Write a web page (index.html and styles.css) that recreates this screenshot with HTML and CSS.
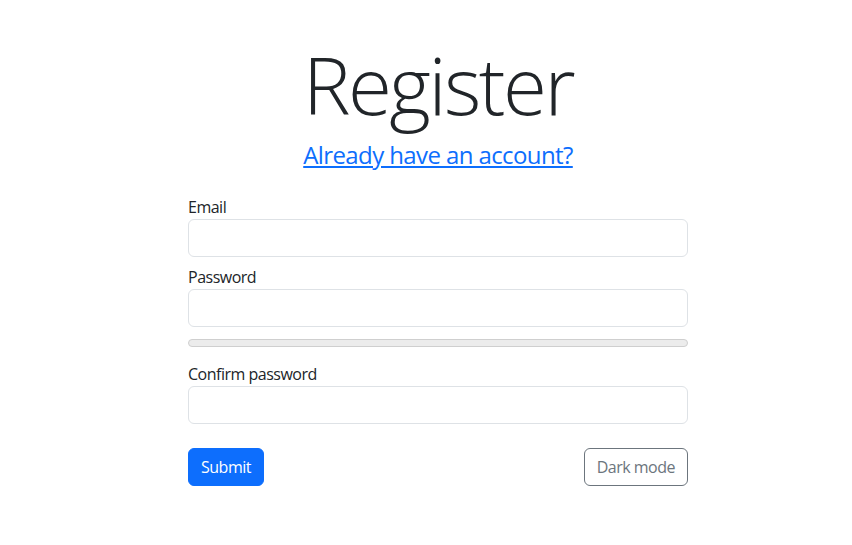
FILE: index.html
```html
<!DOCTYPE html>
<html lang="en">
<head>
<meta charset="utf-8">
<title>Register</title>
<link rel="stylesheet" href="styles.css">
</head>
<body>
<main class="container">
  <header class="intro">
    <h1 class="title">Register</h1>
    <a class="login-link" href="#">Already have an account?</a>
  </header>
  <form class="form">
    <div class="field">
      <label class="label" for="email">Email</label>
      <input class="input" id="email" type="email">
    </div>
    <div class="field">
      <label class="label" for="password">Password</label>
      <input class="input" id="password" type="password">
      <div class="strength"></div>
    </div>
    <div class="field">
      <label class="label" for="confirm">Confirm password</label>
      <input class="input" id="confirm" type="password">
    </div>
    <div class="actions">
      <button type="button" class="btn btn-primary">Submit</button>
      <button type="button" class="btn btn-outline">Dark mode</button>
    </div>
  </form>
</main>
</body>
</html>
```
FILE: styles.css
```css
* { box-sizing: border-box; }
html, body { margin: 0; padding: 0; background: #fff; }
body {
  font-family: "Open Sans", "Noto Sans", sans-serif;
  font-size: 16px;
  line-height: 1.5;
  letter-spacing: -0.5px;
  color: #212529;
}
.container {
  width: 500px;
  margin: 0 0 0 188px;
  padding-top: 36px;
}
.intro {
  display: flex;
  flex-direction: column;
  align-items: center;
}
.title {
  margin: 0;
  font-size: 80px;
  font-weight: 300;
  line-height: 1.2;
  letter-spacing: -2.5px;
}
.login-link {
  font-size: 24px;
  line-height: 1.2;
  letter-spacing: -0.6px;
  color: #0d6efd;
  text-decoration: underline;
  margin-top: 9px;
}
.form {
  margin-top: 25px;
  display: flex;
  flex-direction: column;
}
.field {
  display: flex;
  flex-direction: column;
  margin-bottom: 8px;
}
.label { display: block; }
.input {
  display: block;
  width: 100%;
  height: 38px;
  padding: 6px 12px;
  font: inherit;
  border: 1px solid #dee2e6;
  border-radius: 6px;
  background: #fff;
  outline: none;
}
.strength {
  height: 8px;
  margin-top: 12px;
  margin-bottom: 7px;
  border: 1px solid #cfcfcf;
  border-radius: 4px;
  background: #ececec;
}
.actions {
  display: flex;
  justify-content: space-between;
  margin-top: 16px;
}
.btn {
  height: 38px;
  padding: 6px 12px;
  font: inherit;
  letter-spacing: -0.5px;
  border-radius: 6px;
  border: 1px solid transparent;
  cursor: pointer;
}
.btn-primary { background: #0d6efd; border-color: #0d6efd; color: #fff; }
.btn-outline { background: #fff; border-color: #6c757d; color: #6c757d; }
```
